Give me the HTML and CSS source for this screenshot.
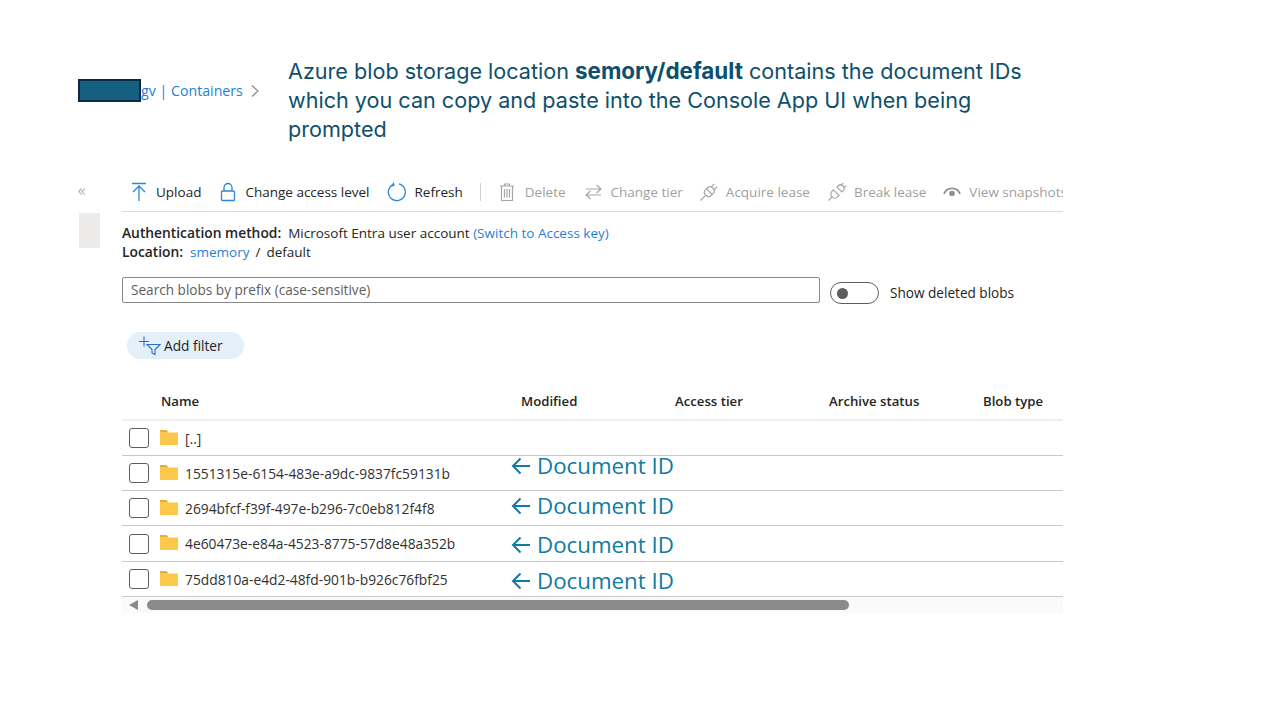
FILE: index.html
```html
<!DOCTYPE html>
<html lang="en">
<head>
  <meta charset="UTF-8">
  <title>Azure blob storage location</title>
  <link rel="stylesheet" href="styles.css">
</head>
<body>
  <div class="slide">

    <!-- top of the slide -->
    <div class="slide-head">
      <div class="crumb">
        <span class="redact"></span>
        <a class="crumb-link">gv | Containers</a>
        <svg class="crumb-chevron" width="10" height="14" viewBox="0 0 10 14"><path d="M2 1.500 8 7l-6 5.500" fill="none" stroke="#8a8a8a" stroke-width="1.200"/></svg>
      </div>
      <p class="callout">Azure blob storage location <b>semory/default</b> contains the document IDs which you can copy and paste into the Console App UI when being prompted</p>
    </div>

    <div class="portal">
      <div class="rail">
        <div class="rail-collapse">«</div>
        <div class="rail-item"></div>
      </div>

      <div class="panel">
        <!-- toolbar -->
        <div class="toolbar">
          <div class="tool tool-upload">
            <svg width="18" height="20" viewBox="0 0 18 20"><path d="M2 1.500h14M9 19V4M3 10 9 4l6 6" fill="none" stroke="#2b88d8" stroke-width="1.300"/></svg>
            <span>Upload</span>
          </div>
          <div class="tool tool-access">
            <svg width="16" height="20" viewBox="0 0 16 20"><path d="M4 9V5.500a4 4 0 0 1 8 0V9" fill="none" stroke="#2b88d8" stroke-width="1.300"/><rect x="1.500" y="9" width="13" height="9.500" rx="1" fill="none" stroke="#2b88d8" stroke-width="1.300"/></svg>
            <span>Change access level</span>
          </div>
          <div class="tool tool-refresh">
            <svg width="20" height="20" viewBox="0 0 20 20"><path d="M6.500 2.300A8.500 8.500 0 1 0 12 1.900" fill="none" stroke="#2b88d8" stroke-width="1.300"/><path d="M6 .5 7.200 3 4.600 4.200" fill="none" stroke="#2b88d8" stroke-width="1.200"/></svg>
            <span>Refresh</span>
          </div>
          <div class="tool-sep"></div>
          <div class="tool tool-off tool-delete">
            <svg width="16" height="20" viewBox="0 0 16 20"><path d="M1 4h14M5.500 4V2h5v2M2.500 4v14.500h11V4M5.500 7v8.500M8 7v8.500M10.500 7v8.500" fill="none" stroke="#a6a6a6" stroke-width="1.200"/></svg>
            <span>Delete</span>
          </div>
          <div class="tool tool-off tool-tier">
            <svg width="17" height="16" viewBox="0 0 17 16"><path d="M1 5h15M11.500 1 16 5l-4.500 4M16 11H1M5.500 7 1 11l4.500 4" fill="none" stroke="#a6a6a6" stroke-width="1.200"/></svg>
            <span>Change tier</span>
          </div>
          <div class="tool tool-off tool-acquire">
            <svg width="18" height="18" viewBox="0 0 18 18"><g transform="rotate(45 9 9)" fill="none" stroke="#a6a6a6" stroke-width="1.200"><rect x="5" y="3.500" width="8" height="10" rx="3.500"/><path d="M5 8.500h8M9 13.500V21M7 3.500V-.5M11 3.500V-.5"/></g></svg>
            <span>Acquire lease</span>
          </div>
          <div class="tool tool-off tool-break">
            <svg width="18" height="18" viewBox="0 0 18 18"><g transform="rotate(45 9 9)" fill="none" stroke="#a6a6a6" stroke-width="1.200"><path d="M5 10h8v2a4 4 0 0 1-8 0ZM9 16v5"/><path d="M5.500 6h7V4.500a3.500 3.500 0 0 0-7 0ZM7 1V-1.500M11 1V-1.500" transform="translate(0 -.5)"/></g></svg>
            <span>Break lease</span>
          </div>
          <div class="tool tool-off tool-snap">
            <svg width="18" height="12" viewBox="0 0 18 12"><path d="M1 8a8.500 8.500 0 0 1 16 0" fill="none" stroke="#8f8f8f" stroke-width="1.800"/><circle cx="9" cy="7.500" r="2.800" fill="#8f8f8f"/></svg>
            <span>View snapshots</span>
          </div>
        </div>

        <!-- auth + location -->
        <div class="meta">
          <div><b>Authentication method:</b>&nbsp; Microsoft Entra user account <a>(Switch to Access key)</a></div>
          <div><b>Location:</b>&nbsp; <a>smemory</a><span class="meta-sep">/</span>default</div>
        </div>

        <div class="search-row">
          <div class="search">Search blobs by prefix (case-sensitive)</div>
          <div class="toggle"><i></i></div>
          <span class="toggle-label">Show deleted blobs</span>
        </div>

        <div class="filter">
          <svg width="24" height="20" viewBox="0 0 24 20"><path d="M1 5.500h10M6 .5v10" fill="none" stroke="#2f6fc4" stroke-width="1.100"/><path d="M9 8.500h13l-5 5v5l-3-1.500v-3.500Z" fill="none" stroke="#2f6fc4" stroke-width="1.100"/></svg>
          <span>Add filter</span>
        </div>

        <!-- blob table -->
        <div class="table">
          <div class="row row-head">
            <span></span>
            <span>Name</span>
            <span>Modified</span>
            <span>Access tier</span>
            <span>Archive status</span>
            <span>Blob type</span>
          </div>

          <div class="row">
            <span class="check"></span>
            <span class="blob"><svg class="folder" width="20" height="16" viewBox="0 0 20 16"><path d="M1 2h7l1.500 1.500H19V16H1Z" fill="#fcc84a"/><path d="M1 1h6.500L9 3H1Z" fill="#e8ac2e"/></svg>[..]</span>
          </div>
          <div class="row">
            <span class="check"></span>
            <span class="blob"><svg class="folder" width="20" height="16" viewBox="0 0 20 16"><path d="M1 2h7l1.500 1.500H19V16H1Z" fill="#fcc84a"/><path d="M1 1h6.500L9 3H1Z" fill="#e8ac2e"/></svg>1551315e-6154-483e-a9dc-9837fc59131b</span>
            <div class="doc-note note-a"><svg width="20" height="18" viewBox="0 0 20 18"><path d="M19 9H2M9.500 1.500 2 9l7.500 7.500" fill="none" stroke="#0f7ba3" stroke-width="2"/></svg><span>Document ID</span></div>
          </div>
          <div class="row">
            <span class="check"></span>
            <span class="blob"><svg class="folder" width="20" height="16" viewBox="0 0 20 16"><path d="M1 2h7l1.500 1.500H19V16H1Z" fill="#fcc84a"/><path d="M1 1h6.500L9 3H1Z" fill="#e8ac2e"/></svg>2694bfcf-f39f-497e-b296-7c0eb812f4f8</span>
            <div class="doc-note note-b"><svg width="20" height="18" viewBox="0 0 20 18"><path d="M19 9H2M9.500 1.500 2 9l7.500 7.500" fill="none" stroke="#0f7ba3" stroke-width="2"/></svg><span>Document ID</span></div>
          </div>
          <div class="row row-tall">
            <span class="check"></span>
            <span class="blob"><svg class="folder" width="20" height="16" viewBox="0 0 20 16"><path d="M1 2h7l1.500 1.500H19V16H1Z" fill="#fcc84a"/><path d="M1 1h6.500L9 3H1Z" fill="#e8ac2e"/></svg>4e60473e-e84a-4523-8775-57d8e48a352b</span>
            <div class="doc-note note-c"><svg width="20" height="18" viewBox="0 0 20 18"><path d="M19 9H2M9.500 1.500 2 9l7.500 7.500" fill="none" stroke="#0f7ba3" stroke-width="2"/></svg><span>Document ID</span></div>
          </div>
          <div class="row">
            <span class="check"></span>
            <span class="blob"><svg class="folder" width="20" height="16" viewBox="0 0 20 16"><path d="M1 2h7l1.500 1.500H19V16H1Z" fill="#fcc84a"/><path d="M1 1h6.500L9 3H1Z" fill="#e8ac2e"/></svg>75dd810a-e4d2-48fd-901b-b926c76fbf25</span>
            <div class="doc-note note-d"><svg width="20" height="18" viewBox="0 0 20 18"><path d="M19 9H2M9.500 1.500 2 9l7.500 7.500" fill="none" stroke="#0f7ba3" stroke-width="2"/></svg><span>Document ID</span></div>
          </div>
        </div>

        <div class="scrollbar">
          <span class="scroll-arrow"></span>
          <span class="scroll-thumb"></span>
        </div>
      </div>
    </div>
  </div>
</body>
</html>
```

FILE: styles.css
```css
* {
  box-sizing: border-box;
}

body {
  margin: 0;
  background: #fff;
  font-family: 'Open Sans', sans-serif;
  color: #242424;
}

.slide {
  width: 1280px;
  height: 720px;
  padding: 57px 0 0 78px;
  overflow: hidden;
}

.slide-head {
  display: flex;
  align-items: flex-start;
  height: 122px;
}

.crumb {
  width: 210px;
  height: 23px;
  margin-top: 22px;
  display: flex;
  align-items: center;
  font-size: 14.200px;
  color: #1f7fd4;
}

.redact {
  flex: none;
  width: 63px;
  height: 23px;
  background: #156082;
  border: 2px solid #0e2841;
}

.crumb-chevron {
  margin-left: 7px;
}

.callout {
  margin: 0;
  width: 770px;
  font-family: 'Inter', sans-serif;
  font-size: 21.600px;
  line-height: 29px;
  color: #0e4f6c;
}

.callout b {
  font-size: 22.400px;
  line-height: 1;
}

.portal {
  display: flex;
}

.rail {
  width: 44px;
}

.rail-collapse {
  height: 34px;
  font-size: 17px;
  font-weight: 300;
  line-height: 21px;
  color: #8a8a8a;
}

.rail-item {
  width: 21px;
  height: 35px;
  margin-left: 1px;
  background: #edebe9;
}

.panel {
  width: 941px;
}

.toolbar {
  display: flex;
  align-items: center;
  height: 33px;
  padding-bottom: 6px;
  border-bottom: 1px solid #dcdcdc;
  font-size: 13.500px;
  white-space: nowrap;
  overflow: hidden;
}

.tool {
  display: flex;
  align-items: center;
  flex: none;
  gap: 8px;
}

.tool-off {
  color: #a19f9d;
}

.tool-upload {
  margin-left: 8px;
}

.tool-access {
  margin-left: 19px;
  gap: 9px;
}

.tool-refresh {
  margin-left: 17px;
}

.tool-sep {
  flex: none;
  width: 1px;
  height: 18px;
  margin: 0 18px 0 17px;
  background: #d0d0d0;
}

.tool-delete {
  gap: 10px;
}

.tool-tier {
  margin-left: 19px;
  gap: 9px;
}

.tool-acquire,
.tool-snap {
  margin-left: 17px;
}

.tool-break {
  margin-left: 18px;
}

.meta {
  padding-top: 12px;
  font-size: 13.500px;
  line-height: 19px;
}

.meta div {
  height: 19px;
}

.meta b {
  font-size: 13.800px;
  font-weight: 600;
  line-height: 1;
}

.meta a {
  color: #1f7fd4;
}

.meta-sep {
  margin: 0 6px;
}

.search-row {
  display: flex;
  align-items: flex-start;
  margin-top: 15px;
}

.search {
  width: 698px;
  height: 26px;
  padding-left: 8px;
  border: 1px solid #8a8886;
  border-radius: 2px;
  font-size: 13.600px;
  line-height: 23px;
  color: #605e5c;
}

.toggle {
  width: 49px;
  height: 22px;
  margin: 5px 0 0 10px;
  padding: 5px 0 0 6px;
  border: 1px solid #605e5c;
  border-radius: 11px;
}

.toggle i {
  display: block;
  width: 11px;
  height: 11px;
  border-radius: 50%;
  background: #605e5c;
}

.toggle-label {
  margin: 6px 0 0 11px;
  font-size: 13.600px;
  line-height: 20px;
}

.filter {
  display: flex;
  align-items: center;
  width: 117px;
  height: 27px;
  margin: 28px 0 0 5px;
  padding-left: 11px;
  border-radius: 14px;
  background: #e3f0f9;
  font-size: 13.700px;
}

.filter svg {
  margin-right: 2px;
}

.row {
  position: relative;
  display: grid;
  grid-template-columns: 39px 360px 154px 154px 154px 1fr;
  align-items: center;
  height: 35px;
  border-bottom: 1px solid #c8c8c8;
  font-size: 13.800px;
}

.row-tall {
  height: 36px;
}

.row-head {
  height: 48px;
  margin-top: 14px;
  padding-top: 10px;
  border-bottom: 2px solid #f0f0f0;
  font-size: 13.200px;
  font-weight: 600;
}

.check {
  width: 20px;
  height: 20px;
  margin-left: 7px;
  border: 1.500px solid #605e5c;
  border-radius: 3px;
}

.blob {
  display: flex;
  align-items: center;
  white-space: nowrap;
  color: #323130;
}

.folder {
  margin: -3px 6px 0 -2px;
}

.doc-note {
  position: absolute;
  left: 389px;
  display: flex;
  align-items: center;
  gap: 6px;
  font-size: 22.300px;
  line-height: 26px;
  color: #0f7ba3;
}

.note-a {
  top: -3px;
}

.note-b {
  top: 2px;
}

.note-c {
  top: 6px;
}

.note-d {
  top: 6px;
}

.scrollbar {
  display: flex;
  align-items: center;
  height: 16px;
  background: #fafafa;
}

.scroll-arrow {
  margin-left: 7px;
  border-top: 5px solid transparent;
  border-bottom: 5px solid transparent;
  border-right: 9px solid #8a8a8a;
}

.scroll-thumb {
  width: 702px;
  height: 10px;
  margin-left: 9px;
  border-radius: 5px;
  background: #8a8a8a;
}
```
